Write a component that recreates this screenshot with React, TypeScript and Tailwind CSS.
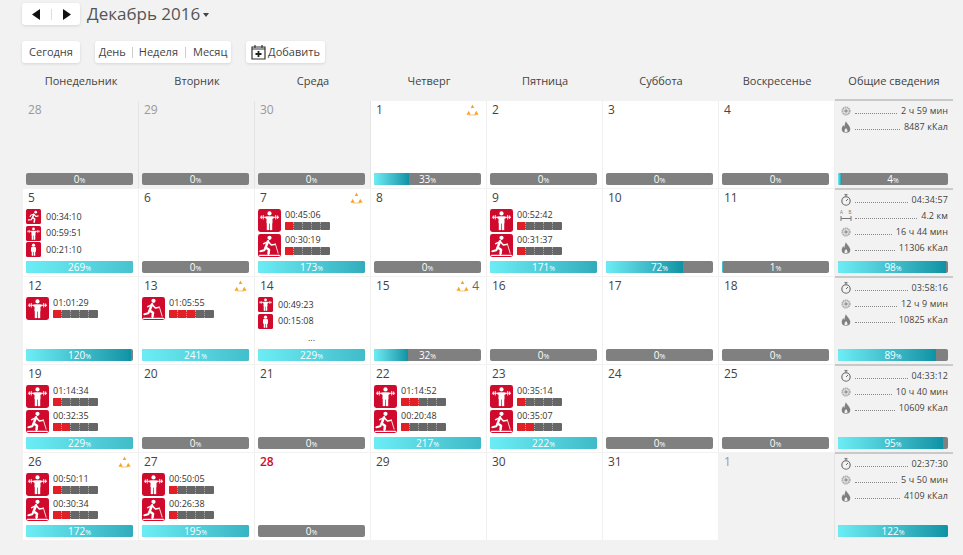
import React from "react";

type Kind = "lift" | "tread" | "run" | "person";
type Act = { k: Kind; t: string; p?: number };
type Day = { d: number; muted?: boolean; red?: boolean; alert?: boolean | number; acts?: Act[]; more?: boolean; pct?: number };
type StatKind = "watch" | "dist" | "burn" | "flame";
type Stat = { i: StatKind; v: string };

function ActIcon({ k, s }: { k: Kind; s: number }) {
  return (
    <svg width={s} height={s} viewBox="0 0 24 24" className="shrink-0 block">
      <rect width="24" height="24" rx="2.5" fill="#cf0a2c" />
      {k === "lift" && (
        <g fill="#fff" stroke="#fff">
          <circle cx="12" cy="4.6" r="2.2" stroke="none" />
          <path d="M2 8.6H22" strokeWidth="1" />
          <path d="M3.5 6.8V10.4M5.5 6.3V10.9M18.5 6.3V10.9M20.5 6.8V10.4" strokeWidth="1" />
          <path d="M7.2 8.6L9.5 8V8L14.5 8L16.8 8.6L14.8 10.8V14.5H9.2V10.8Z" strokeWidth="0.6" />
          <path d="M9.3 14V21.8H11.5V15H12.5V21.8H14.7V14Z" strokeWidth="0.3" />
        </g>
      )}
      {k === "tread" && (
        <g fill="none" stroke="#fff" strokeLinecap="round" strokeLinejoin="round">
          <circle cx="12" cy="4" r="2.2" fill="#fff" stroke="none" />
          <path d="M10.5 7.5L8 14L11.5 16.5L11 20.5" strokeWidth="2.6" />
          <path d="M8 14L6.5 17L2.5 18" strokeWidth="2.2" />
          <path d="M10.5 8L6 10M10.5 8L14 11.5L17 11" strokeWidth="1.6" />
          <path d="M18 10L21 20" strokeWidth="0.9" />
          <path d="M1.5 22.3H22.5" strokeWidth="1.1" />
        </g>
      )}
      {k === "run" && (
        <g fill="none" stroke="#fff" strokeLinecap="round" strokeLinejoin="round">
          <circle cx="15.5" cy="5" r="2.2" fill="#fff" stroke="none" />
          <path d="M12.5 8.5L10.5 13.5L14 16L13 21" strokeWidth="2.4" />
          <path d="M10.5 13.5L8.5 17L4 17.5" strokeWidth="2.2" />
          <path d="M12.5 8.5L8 9.5L6.5 12M12.5 8.5L16 12L19.5 11" strokeWidth="1.7" />
        </g>
      )}
      {k === "person" && (
        <g fill="#fff">
          <circle cx="12" cy="5" r="2.6" />
          <path d="M8 9.5Q8 8 9.5 8H14.5Q16 8 16 9.5V15L14.8 15.5V22H12.5V16H11.5V22H9.2V15.5L8 15Z" />
        </g>
      )}
    </svg>
  );
}

function Alert() {
  return (
    <svg width="13" height="12" viewBox="0 0 13 12" className="block">
      <path d="M6.5 0.5L8.3 4H4.7Z M2.8 6.8L4.6 10.8H0.4Z M10.2 6.8L12.6 10.8H8.2Z" fill="#f5a52e" />
      <path d="M3.2 11H9.8" stroke="#f5a52e" strokeWidth="0.6" />
    </svg>
  );
}

function StatIcon({ i }: { i: StatKind }) {
  if (i === "watch")
    return (
      <svg width="10" height="12" viewBox="0 0 10 12" className="block">
        <path d="M3.5 0.7H6.5M5 0.7V2.5" stroke="#666" fill="none" />
        <circle cx="5" cy="7" r="4.2" stroke="#666" strokeWidth="1.1" fill="none" />
        <path d="M5 7L7 5" stroke="#666" />
      </svg>
    );
  if (i === "dist")
    return (
      <svg width="12" height="12" viewBox="0 0 12 12" className="block">
        <text x="0" y="4" fontSize="4.5" fill="#777" fontFamily="Open Sans">A</text>
        <text x="8.5" y="4" fontSize="4.5" fill="#777" fontFamily="Open Sans">B</text>
        <path d="M1 6V11M11 6V11M1 8.5H11" stroke="#777" fill="none" />
      </svg>
    );
  if (i === "burn")
    return (
      <svg width="10" height="10" viewBox="0 0 10 10" className="block">
        <circle cx="5" cy="5" r="3.6" fill="none" stroke="#aaa" strokeWidth="2" strokeDasharray="1.4 0.5" />
        <circle cx="5" cy="5" r="1.8" fill="#999" />
      </svg>
    );
  return (
    <svg width="10" height="12" viewBox="0 0 10 12" className="block">
      <path d="M5 0.3C6 3 9.3 5 9.3 8.2C9.3 10.5 7.5 11.8 5 11.8C2.5 11.8 0.7 10.5 0.7 8.2C0.7 6.3 1.8 5 2.4 4C2.7 5 3 5.5 3.5 5.8C3.5 3.8 4 2 5 0.3Z M5 7C4 8.3 3.5 9 3.5 10C3.5 10.8 4.2 11.2 5 11.2C5.8 11.2 6.5 10.8 6.5 10C6.5 9 5.8 8.2 5 7Z" fill="#808080" fillRule="evenodd" />
    </svg>
  );
}

function Bar({ pct }: { pct: number }) {
  const w = Math.min(pct, 100);
  const span = Math.max(pct, 100);
  const size = pct > 100 ? (span / 100) * 100 * 0.82 : 100;
  return (
    <div className="relative h-3 rounded-[2px] bg-[#808080] overflow-hidden">
      {pct > 0 && (
        <div
          className="absolute left-0 top-0 h-full bg-gradient-to-r from-[#6cedf5] to-[#0b93a5]"
          style={{ width: `${w}%`, backgroundSize: `${size}% 100%`, backgroundRepeat: "no-repeat" }}
        />
      )}
      <div className="relative text-center text-white text-[10px] leading-3">
        {pct}
        <span className="text-[7px]">%</span>
      </div>
    </div>
  );
}

function Pips({ n }: { n: number }) {
  return (
    <div className="relative w-[45px] h-2 rounded-[1px] bg-[#666] overflow-hidden">
      <div className="absolute left-0 top-0 h-full bg-[#e01f26]" style={{ width: `${n * 9}px` }} />
      <div className="absolute inset-0 flex">
        {[0, 1, 2, 3, 4].map((i) => (
          <div key={i} className="w-[9px] h-full border-r border-dotted border-[#aaa] last:border-r-0" />
        ))}
      </div>
    </div>
  );
}

function Cell({ day }: { day: Day }) {
  const acts = day.acts ?? [];
  const large = acts.length > 0 && acts[0].p !== undefined;
  return (
    <div
      className={`flex flex-col pl-[3px] pr-[5px] border-r min-h-0 ${
        day.muted ? "bg-[#f2f2f2] border-[#e4e4e4]" : "bg-white border-[#f0f0f0]"
      }`}
    >
      <div className="flex items-center justify-between h-5 pl-[2px] pr-[2px] pb-[2px] shrink-0">
        <span className={`text-xs ${day.muted ? "text-[#999]" : day.red ? "text-[#cf0a2c] font-semibold" : "text-[#444]"}`}>{day.d}</span>
        {day.alert && (
          <span className="flex items-center gap-[3px] text-xs text-[#666]">
            <Alert />
            {typeof day.alert === "number" ? day.alert : null}
          </span>
        )}
      </div>
      {large ? (
        <div className="flex flex-col gap-[2px]">
          {acts.map((a, i) => (
            <div key={i} className="flex items-start gap-[4px] h-[23px]">
              <ActIcon k={a.k} s={23} />
              <div className="flex flex-col gap-[1px]">
                <div className="text-[9px] leading-[12px] text-[#333]">{a.t}</div>
                <Pips n={a.p ?? 0} />
              </div>
            </div>
          ))}
        </div>
      ) : (
        <div className="flex flex-col gap-[1.5px]">
          {acts.map((a, i) => (
            <div key={i} className="flex items-center gap-[5px] h-[15px]">
              <ActIcon k={a.k} s={15} />
              <div className="text-[9px] text-[#333]">{a.t}</div>
            </div>
          ))}
          {day.more && <div className="text-[9px] leading-[10px] mt-[3px] text-center text-[#444]">...</div>}
        </div>
      )}
      {day.pct !== undefined && (
        <div className="mt-auto mb-[3px]">
          <Bar pct={day.pct} />
        </div>
      )}
    </div>
  );
}

function Stats({ lines, pct, first }: { lines: Stat[]; pct: number; first?: boolean }) {
  return (
    <div className={`flex flex-col bg-[#f2f2f2] border-t-2 border-[#c9c9c9] pl-[3px] pr-[5px] ${first ? "-mt-[2px]" : "-mt-[1px]"}`}>
      <div className="flex flex-col pt-[2px] pl-[2px]">
        {lines.map((l, i) => (
          <div key={i} className="flex items-center h-4 text-[9px] text-[#444]">
            <span className="w-3 flex justify-center shrink-0">
              <StatIcon i={l.i} />
            </span>
            <span className="flex-1 ml-[3px] mr-[4px] mt-[5px] border-b border-dotted border-[#888]" />
            <span className="shrink-0 tracking-[0.1px]">{l.v}</span>
          </div>
        ))}
      </div>
      <div className="mt-auto mb-[3px]">
        <Bar pct={pct} />
      </div>
    </div>
  );
}

const L = (t: string, p: number): Act => ({ k: "lift", t, p });
const T = (t: string, p: number): Act => ({ k: "tread", t, p });

const rows: { days: Day[]; stats: Stat[]; pct: number }[] = [
  {
    days: [
      { d: 28, muted: true, pct: 0 },
      { d: 29, muted: true, pct: 0 },
      { d: 30, muted: true, pct: 0 },
      { d: 1, alert: true, pct: 33 },
      { d: 2, pct: 0 },
      { d: 3, pct: 0 },
      { d: 4, pct: 0 },
    ],
    stats: [
      { i: "burn", v: "2 ч 59 мин" },
      { i: "flame", v: "8487 кКал" },
    ],
    pct: 4,
  },
  {
    days: [
      { d: 5, acts: [{ k: "run", t: "00:34:10" }, { k: "lift", t: "00:59:51" }, { k: "person", t: "00:21:10" }], pct: 269 },
      { d: 6, pct: 0 },
      { d: 7, alert: true, acts: [L("00:45:06", 1), T("00:30:19", 1)], pct: 173 },
      { d: 8, pct: 0 },
      { d: 9, acts: [L("00:52:42", 1), T("00:31:37", 1)], pct: 171 },
      { d: 10, pct: 72 },
      { d: 11, pct: 1 },
    ],
    stats: [
      { i: "watch", v: "04:34:57" },
      { i: "dist", v: "4.2 км" },
      { i: "burn", v: "16 ч 44 мин" },
      { i: "flame", v: "11306 кКал" },
    ],
    pct: 98,
  },
  {
    days: [
      { d: 12, acts: [L("01:01:29", 1)], pct: 120 },
      { d: 13, alert: true, acts: [T("01:05:55", 3)], pct: 241 },
      { d: 14, acts: [{ k: "lift", t: "00:49:23" }, { k: "person", t: "00:15:08" }], more: true, pct: 229 },
      { d: 15, alert: 4, pct: 32 },
      { d: 16, pct: 0 },
      { d: 17, pct: 0 },
      { d: 18, pct: 0 },
    ],
    stats: [
      { i: "watch", v: "03:58:16" },
      { i: "burn", v: "12 ч 9 мин" },
      { i: "flame", v: "10825 кКал" },
    ],
    pct: 89,
  },
  {
    days: [
      { d: 19, acts: [L("01:14:34", 1), T("00:32:35", 2)], pct: 229 },
      { d: 20, pct: 0 },
      { d: 21, pct: 0 },
      { d: 22, acts: [L("01:14:52", 2), T("00:20:48", 1)], pct: 217 },
      { d: 23, acts: [L("00:35:14", 1), T("00:35:07", 2)], pct: 222 },
      { d: 24, pct: 0 },
      { d: 25, pct: 0 },
    ],
    stats: [
      { i: "watch", v: "04:33:12" },
      { i: "burn", v: "10 ч 40 мин" },
      { i: "flame", v: "10609 кКал" },
    ],
    pct: 95,
  },
  {
    days: [
      { d: 26, alert: true, acts: [L("00:50:11", 1), T("00:30:34", 2)], pct: 172 },
      { d: 27, acts: [L("00:50:05", 1), T("00:26:38", 1)], pct: 195 },
      { d: 28, red: true, pct: 0 },
      { d: 29 },
      { d: 30 },
      { d: 31 },
      { d: 1, muted: true },
    ],
    stats: [
      { i: "watch", v: "02:37:30" },
      { i: "burn", v: "5 ч 50 мин" },
      { i: "flame", v: "4109 кКал" },
    ],
    pct: 122,
  },
];

const heads = ["Понедельник", "Вторник", "Среда", "Четверг", "Пятница", "Суббота", "Воскресенье", "Общие сведения"];
const btn = "flex items-center bg-white rounded-[3px] shadow-[0_1px_3px_rgba(0,0,0,0.12)] h-[22px] text-[#444] text-[11px]";

export default function App() {
  return (
    <div className="w-[963px] h-[555px] overflow-hidden bg-[#f2f2f2] font-['Open_Sans',sans-serif]">
      <div className="flex items-center pl-[22px] pt-[2px] h-[26px]">
        <div className={`${btn} w-[58px] justify-center`}>
          <svg width="9" height="11" viewBox="0 0 9 11"><path d="M8 0V11L0 5.5Z" fill="#111" /></svg>
          <span className="w-px h-[11px] bg-[#ddd] mx-[10px]" />
          <svg width="9" height="11" viewBox="0 0 9 11"><path d="M1 0V11L9 5.5Z" fill="#111" /></svg>
        </div>
        <div className="ml-[7px] text-[17px] leading-[26px] text-[#555]">Декабрь 2016</div>
        <svg width="6" height="4" viewBox="0 0 6 4" className="ml-[3px] mt-[2px]"><path d="M0 0H6L3 4Z" fill="#444" /></svg>
      </div>
      <div className="flex items-center pl-[22px] mt-[15px]">
        <div className={`${btn} w-[58px] justify-center`}>Сегодня</div>
        <div className={`${btn} ml-[15px] w-[136px] justify-center`}>
          <span>День</span>
          <span className="w-px h-[11px] bg-[#ccc] mx-[6px]" />
          <span>Неделя</span>
          <span className="w-px h-[11px] bg-[#ccc] mx-[7px]" />
          <span>Месяц</span>
        </div>
        <div className={`${btn} ml-[15px] w-[79px] justify-center gap-[2px]`}>
          <svg width="15" height="16" viewBox="0 0 15 16">
            <path d="M1 3H14V15H1Z" fill="none" stroke="#333" strokeWidth="1.2" />
            <path d="M4 1V4M11 1V4M1 5H14" stroke="#333" strokeWidth="1.2" />
            <path d="M7.5 7V13M4.5 10H10.5" stroke="#222" strokeWidth="1.8" />
          </svg>
          <span>Добавить</span>
        </div>
      </div>
      <div className="grid grid-cols-[repeat(7,116px)_118px] ml-[23px] h-[38px] items-center pb-[2px]">
        {heads.map((h) => (
          <div key={h} className="text-center text-[11px] text-[#444]">{h}</div>
        ))}
      </div>
      <div className="grid grid-cols-[repeat(7,116px)_118px] auto-rows-[87px] gap-y-px ml-[23px]">
        {rows.map((r, i) => (
          <React.Fragment key={i}>
            {r.days.map((d, j) => (
              <Cell key={j} day={d} />
            ))}
            <Stats lines={r.stats} pct={r.pct} first={i === 0} />
          </React.Fragment>
        ))}
      </div>
    </div>
  );
}
